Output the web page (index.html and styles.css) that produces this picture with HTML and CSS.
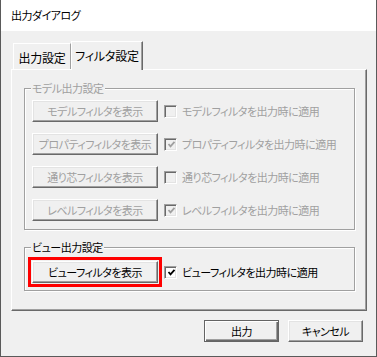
FILE: index.html
```html
<!DOCTYPE html>
<html lang="ja">
<head>
<meta charset="utf-8">
<link rel="stylesheet" href="styles.css">
</head>
<body>
<div class="window">
  <div class="titlebar">出力ダイアログ</div>
  <div class="client">
    <div class="tabs">
      <div class="tab">出力設定</div>
      <div class="tab selected">フィルタ設定</div>
    </div>
    <div class="panel">
      <div class="group g1 disabled">
        <div class="group-title">モデル出力設定</div>
        <div class="rows">
          <div class="row">
            <button class="btn wide" disabled>モデルフィルタを表示</button>
            <span class="check"></span>
            <span class="label">モデルフィルタを出力時に適用</span>
          </div>
          <div class="row">
            <button class="btn wide" disabled>プロパティフィルタを表示</button>
            <span class="check"><svg viewBox="0 0 9 9" width="9" height="9"><polyline points="1.5,4 3.5,6.3 7.5,1.8" fill="none" stroke="currentColor" stroke-width="1.8"/></svg></span>
            <span class="label">プロパティフィルタを出力時に適用</span>
          </div>
          <div class="row">
            <button class="btn wide" disabled>通り芯フィルタを表示</button>
            <span class="check"></span>
            <span class="label">通り芯フィルタを出力時に適用</span>
          </div>
          <div class="row">
            <button class="btn wide" disabled>レベルフィルタを表示</button>
            <span class="check"><svg viewBox="0 0 9 9" width="9" height="9"><polyline points="1.5,4 3.5,6.3 7.5,1.8" fill="none" stroke="currentColor" stroke-width="1.8"/></svg></span>
            <span class="label">レベルフィルタを出力時に適用</span>
          </div>
        </div>
      </div>
      <div class="group g2">
        <div class="group-title">ビュー出力設定</div>
        <div class="rows">
          <div class="row">
            <button class="btn wide highlight">ビューフィルタを表示</button>
            <span class="check on"><svg viewBox="0 0 9 9" width="9" height="9"><polyline points="1.5,4 3.5,6.3 7.5,1.8" fill="none" stroke="currentColor" stroke-width="1.8"/></svg></span>
            <span class="label">ビューフィルタを出力時に適用</span>
          </div>
        </div>
      </div>
    </div>
    <div class="footer">
      <button class="btn small default">出力</button>
      <button class="btn small">キャンセル</button>
    </div>
  </div>
</div>
</body>
</html>
```
FILE: styles.css
```css
html, body {
  margin: 0;
  padding: 0;
  background: #f0f0f0;
}

body {
  font-family: "Noto Sans CJK JP", "Noto Sans", sans-serif;
  font-size: 11px;
  letter-spacing: -0.5px;
  font-feature-settings: "palt";
  color: #000;
}

.window {
  width: 377px;
  height: 357px;
  box-sizing: border-box;
  border: 1px solid #5a5a5a;
  border-top: none;
  background: #f0f0f0;
  display: flex;
  flex-direction: column;
}

.titlebar {
  height: 31px;
  line-height: 30px;
  padding-left: 10px;
  background: #fff;
  flex: none;
}

.client {
  padding-top: 10px;
  display: flex;
  flex-direction: column;
}

.tabs {
  display: flex;
  align-items: flex-end;
  height: 28px;
  margin-left: 12px;
}

.tab {
  box-sizing: border-box;
  height: 26px;
  width: 58px;
  text-align: center;
  line-height: 24px;
  padding-top: 2px;
  border-top: 1px solid #fff;
  border-left: 1px solid #fff;
  border-right: 1px solid #a0a0a0;
  background: #f0f0f0;
  white-space: nowrap;
  font-size: 12px;
  letter-spacing: -0.2px;
}

.tab.selected {
  width: 72px;
  height: 29px;
  margin-bottom: -1px;
  padding-top: 0;
  line-height: 27px;
  position: relative;
  z-index: 1;
  border-right: 1px solid #696969;
  box-shadow: inset -1px 0 0 #a0a0a0;
}

.panel {
  box-sizing: border-box;
  margin-left: 10px;
  width: 356px;
  height: 242px;
  border-top: 1px solid #fff;
  border-left: 1px solid #fff;
  border-right: 1px solid #696969;
  border-bottom: 1px solid #696969;
  box-shadow: inset -1px -1px 0 #a0a0a0;
  display: flex;
  flex-direction: column;
}

.group {
  margin-left: 12px;
  width: 331px;
  box-sizing: border-box;
  border: 1px solid #a0a0a0;
  box-shadow: inset 1px 1px 0 #fff, 1px 1px 0 #fff;
  padding: 0 0 0 7px;
}

.g1 {
  margin-top: 18px;
  padding-bottom: 8px;
}

.g2 {
  margin-top: 17px;
  padding-bottom: 7px;
}

.group-title {
  margin-top: -8px;
  line-height: 15px;
  height: 15px;
  width: fit-content;
  padding: 0 1px;
  margin-left: -1px;
  background: #f0f0f0;
  white-space: nowrap;
}

.disabled .group-title,
.disabled .label,
.disabled .btn {
  color: #a0a0a0;
}

.rows {
  display: flex;
  flex-direction: column;
  gap: 11px;
}

.g1 .rows { margin-top: 4px; }
.g2 .rows { margin-top: 6px; }

.row {
  display: flex;
  align-items: center;
  height: 22px;
}

.btn {
  appearance: none;
  font: inherit;
  letter-spacing: inherit;
  font-feature-settings: "palt";
  color: #000;
  margin: 0;
  padding: 0;
  box-sizing: border-box;
  height: 22px;
  background: #f0f0f0;
  border: 1px solid;
  border-color: #fff #696969 #696969 #fff;
  box-shadow: inset -1px -1px 0 #a0a0a0, inset 1px 1px 0 #e3e3e3;
  text-align: center;
  line-height: 19px;
  white-space: nowrap;
  overflow: hidden;
}

.btn.wide {
  width: 126px;
}

.btn.highlight {
  outline: 3px solid #ff0000;
  outline-offset: 1px;
}

.check {
  width: 13px;
  height: 13px;
  box-sizing: border-box;
  margin-left: 6px;
  border: 1px solid;
  border-color: #a0a0a0 #fff #fff #a0a0a0;
  box-shadow: inset 1px 1px 0 #696969, inset -1px -1px 0 #e3e3e3;
  background: #f0f0f0;
  color: #a0a0a0;
  display: flex;
  align-items: center;
  justify-content: center;
  flex: none;
}

.check svg {
  display: block;
  margin: 1px 0 0 1px;
}

.check.on {
  background: #fff;
  color: #000;
}

.label {
  margin-left: 5px;
  white-space: nowrap;
}

.footer {
  display: flex;
  justify-content: flex-end;
  gap: 9px;
  margin-top: 9px;
  padding-right: 13px;
}

.btn.small {
  width: 75px;
}

.btn.default {
  border-color: #646464;
  box-shadow: inset 1px 1px 0 #fff, inset -1px -1px 0 #696969, inset -2px -2px 0 #a0a0a0;
}
```
